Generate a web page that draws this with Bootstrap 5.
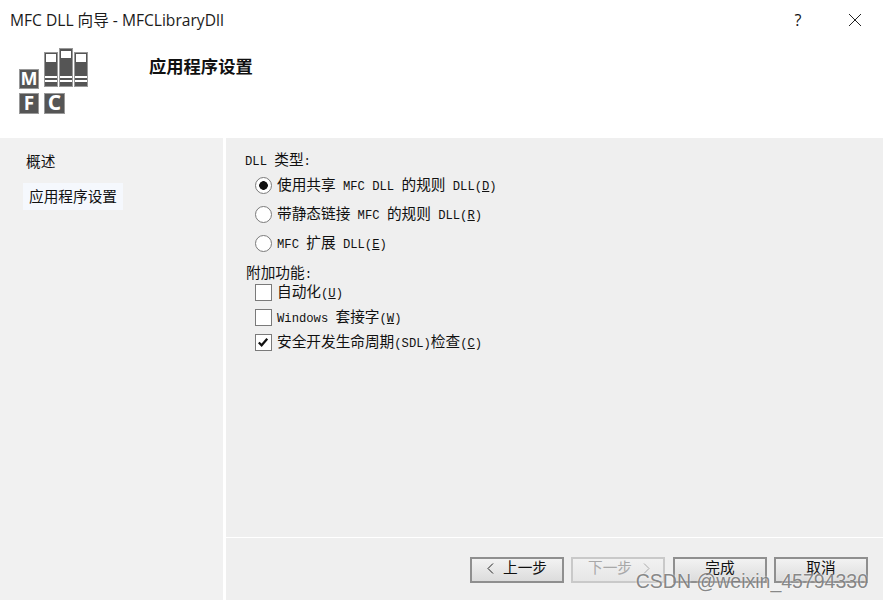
<!DOCTYPE html>
<html lang="zh-CN">
<head>
    <meta charset="UTF-8">
    <meta name="viewport" content="width=device-width, initial-scale=1.0">
    <title>MFC DLL 向导</title>
    <link rel="stylesheet" href="https://cdn.jsdelivr.net/npm/bootstrap@5.3.0/dist/css/bootstrap.min.css">
    <style>
        html, body {
            height: 100%;
        }
        body {
            background: #fff;
            color: #111;
            font-family: "Liberation Sans", "Noto Sans CJK SC", sans-serif;
            font-size: 14.67px;
            line-height: 20px;
            overflow: hidden;
        }
        .dlg {
            position: relative;
            height: 600px;
        }
        .cap-bar {
            height: 38px;
            padding: 2px 0 0 10px;
        }
        .cap-title {
            font-family: "Open Sans", "Noto Sans CJK SC", sans-serif;
            font-size: 15.6px;
            color: #1b1b1b;
        }
        .cap-help {
            width: 26px;
            font-family: "Open Sans", sans-serif;
            font-size: 16px;
            text-align: center;
            margin-right: 37px;
        }
        .cap-close {
            margin-right: 21px;
        }
        .head-band {
            height: 100px;
            padding: 9px 0 0 18px;
        }
        .head-title {
            margin: 10px 0 0 60px;
            font-size: 17.3px;
            font-weight: 700;
            line-height: 20px;
        }
        .wiz-body {
            height: 462px;
        }
        .wiz-side {
            width: 223px;
            background: #f1f1f1;
            padding: 14px 0 0 26px;
        }
        .side-sel {
            margin: 11px 0 0 -3px;
            padding: 4px 0 3px 6px;
            width: 100px;
            background: #f5f8fd;
        }
        .wiz-main {
            width: 657px;
            margin-left: 3px;
            background: #efefef;
        }
        .opt-area {
            height: 400px;
            padding: 15px 0 0 19px;
            border-bottom: 1px solid #fff;
        }
        .lat {
            font-family: "Liberation Mono", monospace;
            font-size: 12.2px;
            white-space: pre;
        }
        .opt-row {
            margin-left: 10px;
            height: 29px;
            margin-bottom: 0;
            padding: 0;
            min-height: 0;
            gap: 5px;
        }
        .opt-row.tight {
            height: 25px;
        }
        .opt-row .form-check-input {
            float: none;
            width: 17px;
            height: 17px;
            margin: 0;
            flex: none;
            background-color: #fff;
            border: 1px solid #7a7a7a;
        }
        .opt-row .form-check-input[type=checkbox] {
            border-radius: 0;
        }
        .opt-row .form-check-input:checked[type=radio] {
            background-color: #fff;
            border-color: #7a7a7a;
            background-image: radial-gradient(circle, #111 0 4px, transparent 4.6px);
        }
        .opt-row .form-check-input:checked[type=checkbox] {
            background-color: #fff;
            border-color: #7a7a7a;
            background-image: url("data:image/svg+xml,%3csvg xmlns='http://www.w3.org/2000/svg' viewBox='0 0 16 16'%3e%3cpath fill='none' stroke='%23111' stroke-width='2.4' d='M3 8l3 3 6-7'/%3e%3c/svg%3e");
            background-size: 15px 15px;
        }
        .opt-row .form-check-label {
            opacity: 1;
        }
        .lbl-types {
            margin-bottom: 4px;
            height: 14px;
            line-height: 14px;
        }
        .lbl-extra {
            margin: 7px 0 -1px 1px;
            height: 16px;
            line-height: 16px;
        }
        .foot-bar {
            height: 61px;
            padding: 19px 15px 0 0;
            gap: 7px;
        }
        .wiz-btn {
            width: 94px;
            height: 26px;
            padding: 0 0 4px;
            border: 2px solid #8f8f8f;
            border-radius: 0;
            color: #111;
            font-size: 14.67px;
            line-height: 18px;
            background: linear-gradient(#f2f2f2, #dcdcdc);
        }
        .wiz-btn:disabled {
            color: #a8a8a8;
            border-color: #c9c9c9;
            background: linear-gradient(#f1f1f1, #e6e6e6);
            opacity: 1;
        }
        .btn-step {
            padding-left: 15px;
            text-align: left;
        }
        .btn-chev {
            vertical-align: -1px;
        }
        .chev-prev {
            margin-right: 9px;
        }
        .chev-next {
            margin-left: 11px;
        }
        .btn-done {
            margin-left: 1px;
        }
        .stamp {
            position: absolute;
            right: 15px;
            top: 569px;
            font-family: "Liberation Sans", sans-serif;
            font-size: 19.5px;
            line-height: 24px;
            color: rgba(105, 105, 105, .8);
            text-shadow: 0 0 2px #fff;
        }
    </style>
</head>
<body>
    <div class="dlg">
        <div class="cap-bar d-flex align-items-center">
            <div class="cap-title flex-grow-1">MFC DLL 向导 - MFCLibraryDll</div>
            <div class="cap-help">?</div>
            <svg class="cap-close" width="14" height="14" viewBox="0 0 14 14"><path d="M1 1l12 12M13 1L1 13" stroke="#222" stroke-width="1" fill="none"/></svg>
        </div>
        <div class="head-band d-flex">
            <svg width="71" height="68" viewBox="0 0 71 68">
                <g fill="#555" stroke="#999" stroke-width="1">
                    <rect x="26.5" y="5.5" width="13" height="34"/>
                    <rect x="41.5" y="1.5" width="13" height="38"/>
                    <rect x="56.5" y="5.5" width="13" height="34"/>
                    <rect x="1.5" y="22.5" width="19" height="19"/>
                    <rect x="1.5" y="46.5" width="19" height="20"/>
                    <rect x="26.5" y="46.5" width="20" height="20"/>
                </g>
                <g fill="#fff">
                    <rect x="28" y="7" width="10" height="8"/>
                    <rect x="43" y="4" width="10" height="7"/>
                    <rect x="58" y="7" width="10" height="8"/>
                    <rect x="27" y="29" width="12" height="2"/>
                    <rect x="27" y="33" width="12" height="2"/>
                    <rect x="42" y="29" width="12" height="2"/>
                    <rect x="42" y="33" width="12" height="2"/>
                    <rect x="57" y="29" width="12" height="2"/>
                    <rect x="57" y="33" width="12" height="2"/>
                </g>
                <g fill="#fff" font-family="Open Sans, sans-serif" font-weight="700" text-anchor="middle">
                    <text x="11" y="38" font-size="18">M</text>
                    <text x="11" y="63" font-size="19">F</text>
                    <text x="36.5" y="63" font-size="21">C</text>
                </g>
            </svg>
            <div class="head-title">应用程序设置</div>
        </div>
        <div class="wiz-body d-flex">
            <div class="wiz-side">
                <div>概述</div>
                <div class="side-sel">应用程序设置</div>
            </div>
            <div class="wiz-main d-flex flex-column">
                <div class="opt-area">
                    <div class="lbl-types"><span class="lat">DLL </span>类型<span class="lat">:</span></div>
                    <div class="form-check opt-row d-flex align-items-center">
                        <input class="form-check-input" type="radio" name="dllType" id="rShared" checked>
                        <label class="form-check-label" for="rShared">使用共享<span class="lat"> MFC DLL </span>的规则<span class="lat"> DLL(<u>D</u>)</span></label>
                    </div>
                    <div class="form-check opt-row d-flex align-items-center">
                        <input class="form-check-input" type="radio" name="dllType" id="rStatic">
                        <label class="form-check-label" for="rStatic">带静态链接<span class="lat"> MFC </span>的规则<span class="lat"> DLL(<u>R</u>)</span></label>
                    </div>
                    <div class="form-check opt-row d-flex align-items-center">
                        <input class="form-check-input" type="radio" name="dllType" id="rExt">
                        <label class="form-check-label" for="rExt"><span class="lat">MFC </span>扩展<span class="lat"> DLL(<u>E</u>)</span></label>
                    </div>
                    <div class="lbl-extra">附加功能<span class="lat">:</span></div>
                    <div class="form-check opt-row tight d-flex align-items-center">
                        <input class="form-check-input" type="checkbox" id="cAuto">
                        <label class="form-check-label" for="cAuto">自动化<span class="lat">(<u>U</u>)</span></label>
                    </div>
                    <div class="form-check opt-row tight d-flex align-items-center">
                        <input class="form-check-input" type="checkbox" id="cSock">
                        <label class="form-check-label" for="cSock"><span class="lat">Windows </span>套接字<span class="lat">(<u>W</u>)</span></label>
                    </div>
                    <div class="form-check opt-row tight d-flex align-items-center">
                        <input class="form-check-input" type="checkbox" id="cSdl" checked>
                        <label class="form-check-label" for="cSdl">安全开发生命周期<span class="lat">(SDL)</span>检查<span class="lat">(<u>C</u>)</span></label>
                    </div>
                </div>
                <div class="foot-bar d-flex justify-content-end">
                    <button type="button" class="btn wiz-btn btn-step"><svg class="btn-chev chev-prev" width="7" height="11" viewBox="0 0 7 11"><path d="M6 .5L1 5.5l5 5" fill="none" stroke="#222"/></svg>上一步</button>
                    <button type="button" class="btn wiz-btn btn-step" disabled>下一步<svg class="btn-chev chev-next" width="7" height="11" viewBox="0 0 7 11"><path d="M1 .5l5 5-5 5" fill="none" stroke="#aaa"/></svg></button>
                    <button type="button" class="btn wiz-btn btn-done">完成</button>
                    <button type="button" class="btn wiz-btn">取消</button>
                </div>
            </div>
        </div>
        <div class="stamp">CSDN @weixin_45794330</div>
    </div>
    <script src="https://cdn.jsdelivr.net/npm/bootstrap@5.3.0/dist/js/bootstrap.bundle.min.js"></script>
</body>
</html>
